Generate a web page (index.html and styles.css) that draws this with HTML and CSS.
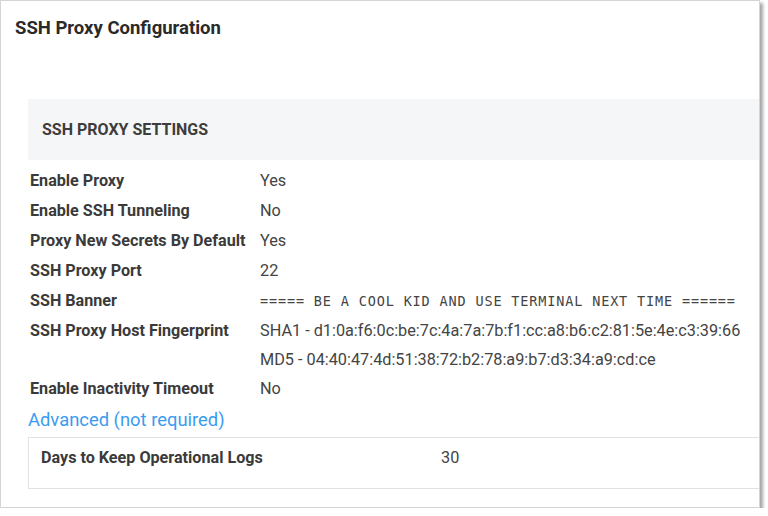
FILE: index.html
```html
<!DOCTYPE html>
<html>
<head>
<meta charset="utf-8">
<link rel="stylesheet" href="styles.css">
</head>
<body>
<div class="window">
  <h1 class="title">SSH Proxy Configuration</h1>
  <div class="section">
    <div class="band"><h2 class="band-title">SSH PROXY SETTINGS</h2></div>
    <div class="rows">
      <div class="row"><div class="label">Enable Proxy</div><div class="value">Yes</div></div>
      <div class="row"><div class="label">Enable SSH Tunneling</div><div class="value">No</div></div>
      <div class="row"><div class="label">Proxy New Secrets By Default</div><div class="value">Yes</div></div>
      <div class="row"><div class="label">SSH Proxy Port</div><div class="value">22</div></div>
      <div class="row"><div class="label">SSH Banner</div><div class="value mono">===== BE A COOL KID AND USE TERMINAL NEXT TIME ======</div></div>
      <div class="row fp"><div class="label">SSH Proxy Host Fingerprint</div><div class="value"><div>SHA1 - d1:0a:f6:0c:be:7c:4a:7a:7b:f1:cc:a8:b6:c2:81:5e:4e:c3:39:66</div><div>MD5 - 04:40:47:4d:51:38:72:b2:78:a9:b7:d3:34:a9:cd:ce</div></div></div>
      <div class="row"><div class="label">Enable Inactivity Timeout</div><div class="value">No</div></div>
    </div>
    <a class="adv">Advanced (not required)</a>
    <div class="box">
      <div class="box-row"><div class="box-label">Days to Keep Operational Logs</div><div class="value">30</div></div>
    </div>
  </div>
</div>
</body>
</html>
```
FILE: styles.css
```css
html, body { margin: 0; padding: 0; background: #fff; }
body { font-family: Roboto, "Liberation Sans", sans-serif; color: #3a3a3a; }
.window {
  width: 758px; height: 506px;
  border: 1px solid #d4d4d4;
  box-shadow: 3px 3px 3px rgba(0,0,0,0.35);
  overflow: hidden;
  background: #fff;
}
.title {
  margin: 0; padding: 14px 0 0 14px;
  font-size: 18.5px; font-weight: 700; line-height: 26px;
  color: #2a2a2a; height: 45px;
}
.section { margin: 39px 0 0 27px; }
.band {
  background: #f5f6f8; height: 61px;
  display: flex; align-items: center; padding-left: 14px;
}
.band-title { margin: 0; font-size: 16px; font-weight: 700; color: #3d3d3d; }
.rows { padding: 6px 0 0 2px; }
.row { display: flex; font-size: 16px; line-height: 30px; }
.label { width: 230px; flex: none; font-weight: 700; font-size: 16.15px; color: #3a3a3a; }
.value { color: #444; font-size: 16.25px; }
.mono { font-family: "DejaVu Sans Mono", "Liberation Mono", monospace; font-size: 13.5px; letter-spacing: 0.85px; }
.fp { line-height: 29px; }
.adv {
  display: block; font-size: 18.4px; line-height: 30px; color: #3a9cf0;
  padding-top: 1px; margin-bottom: 2px;
}
.box { border: 1px solid #e2e2e2; border-right: none; height: 50px; box-sizing: content-box; }
.box-row { display: flex; font-size: 16px; line-height: 30px; padding: 5px 0 0 12px; }
.box-label { width: 400px; flex: none; font-weight: 700; font-size: 16.15px; color: #3a3a3a; }
```
